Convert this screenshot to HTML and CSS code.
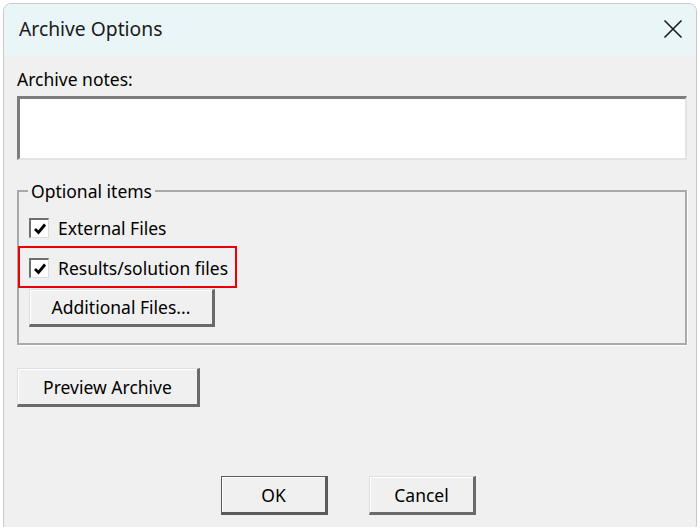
FILE: index.html
```html
<!DOCTYPE html>
<html>
<head>
<meta charset="utf-8">
<link rel="stylesheet" href="styles.css">
</head>
<body>
<div class="window">
  <div class="titlebar">
    <span class="title">Archive Options</span>
    <svg class="close" width="20" height="20" viewBox="0 0 20 20"><path d="M1.5 1.5 L18.5 18.5 M18.5 1.5 L1.5 18.5" stroke="#1a1a1a" stroke-width="1.6" fill="none"/></svg>
  </div>
  <div class="content">
    <div class="label">Archive notes:</div>
    <div class="notes"></div>
    <fieldset class="group">
      <legend class="legend">Optional items</legend>
      <div class="row">
        <span class="check"><svg width="14" height="14" viewBox="0 0 14 14"><path d="M2 7 L5.5 10.5 L12 2.5" stroke="#000" stroke-width="2.8" fill="none"/></svg></span>
        <span class="rowtext">External Files</span>
      </div>
      <div class="row marked">
        <span class="check"><svg width="14" height="14" viewBox="0 0 14 14"><path d="M2 7 L5.5 10.5 L12 2.5" stroke="#000" stroke-width="2.8" fill="none"/></svg></span>
        <span class="rowtext">Results/solution files</span>
        <span class="highlight"></span>
      </div>
      <div class="btnrow"><span class="btn additional">Additional Files...</span></div>
    </fieldset>
    <div class="preview-row"><span class="btn preview">Preview Archive</span></div>
    <div class="actions">
      <span class="btn action default">OK</span>
      <span class="btn action">Cancel</span>
    </div>
  </div>
</div>
</body>
</html>
```
FILE: styles.css
```css
html, body {
  margin: 0;
  padding: 0;
  background: #ffffff;
}
body {
  font-family: "Noto Sans", "Open Sans", sans-serif;
  color: #000;
  width: 698px;
  height: 527px;
  overflow: hidden;
}
.window {
  margin: 3px 0 0 3px;
  width: 694px;
  height: 530px;
  box-sizing: border-box;
  border: 1px solid #c9c9c9;
  border-radius: 8px;
  background: #f0f0f0;
  overflow: hidden;
  display: flex;
  flex-direction: column;
}
.titlebar {
  height: 51px;
  background: #eaf5f8;
  display: flex;
  align-items: center;
  justify-content: space-between;
  padding: 0 13px 0 15px;
  flex: none;
}
.title {
  font-size: 19.3px;
  color: #1a1a1a;
  margin-top: -2px;
}
.close {
  margin-top: -2px;
}
.content {
  padding: 0 10px 0 13px;
  display: flex;
  flex-direction: column;
}
.label {
  font-size: 17.5px;
  line-height: 20px;
  margin-top: 14px;
}
.notes {
  margin-top: 7px;
  height: 64px;
  width: 670px;
  box-sizing: border-box;
  background: #fff;
  border-style: solid;
  border-width: 3px 2px 2px 3px;
  border-color: #7d7d7d #e3e3e3 #e3e3e3 #7d7d7d;
}
.group {
  margin: 21px 0 0 0;
  width: 670px;
  height: 164px;
  box-sizing: border-box;
  padding: 7px 0 0 10px;
  border: 2px solid #a9a9a9;
  box-shadow: 1px 1px 0 #ffffff;
  min-width: 0;
}
.legend {
  font-size: 17.5px;
  line-height: 20px;
  padding: 0 3px;
  margin-left: -1px;
}
.row {
  height: 40px;
  display: flex;
  align-items: center;
  font-size: 17.5px;
}
.marked {
  position: relative;
}
.highlight {
  position: absolute;
  left: -11px;
  top: -2px;
  width: 219px;
  height: 42px;
  box-sizing: border-box;
  border: 2px solid #ee0000;
}
.check {
  width: 20px;
  height: 20px;
  box-sizing: border-box;
  background: #fff;
  border-style: solid;
  border-width: 2px 1px 1px 2px;
  border-color: #6f6f6f #dcdcdc #dcdcdc #6f6f6f;
  display: flex;
  align-items: center;
  justify-content: center;
  margin-right: 9px;
}
.rowtext {
  margin-top: -1px;
}
.btnrow {
  margin-top: 1px;
}
.btn {
  display: inline-flex;
  align-items: center;
  justify-content: center;
  box-sizing: border-box;
  font-size: 17.5px;
  background: #f0f0f0;
  border-style: solid;
  border-width: 1px 3px 3px 1px;
  border-color: #dedede #6a6a6a #6a6a6a #dedede;
  box-shadow: inset 1px 1px 0 #ffffff;
}
.additional {
  width: 186px;
  height: 38px;
}
.preview-row {
  margin-top: 23px;
}
.preview {
  width: 183px;
  height: 39px;
}
.actions {
  margin-top: 69px;
  display: flex;
  justify-content: center;
  gap: 41px;
  padding-right: 6px;
}
.action {
  width: 107px;
  height: 39px;
}
.default {
  border-color: #5c5c5c #5c5c5c #5c5c5c #5c5c5c;
  border-width: 1px 3px 3px 1px;
}
```
